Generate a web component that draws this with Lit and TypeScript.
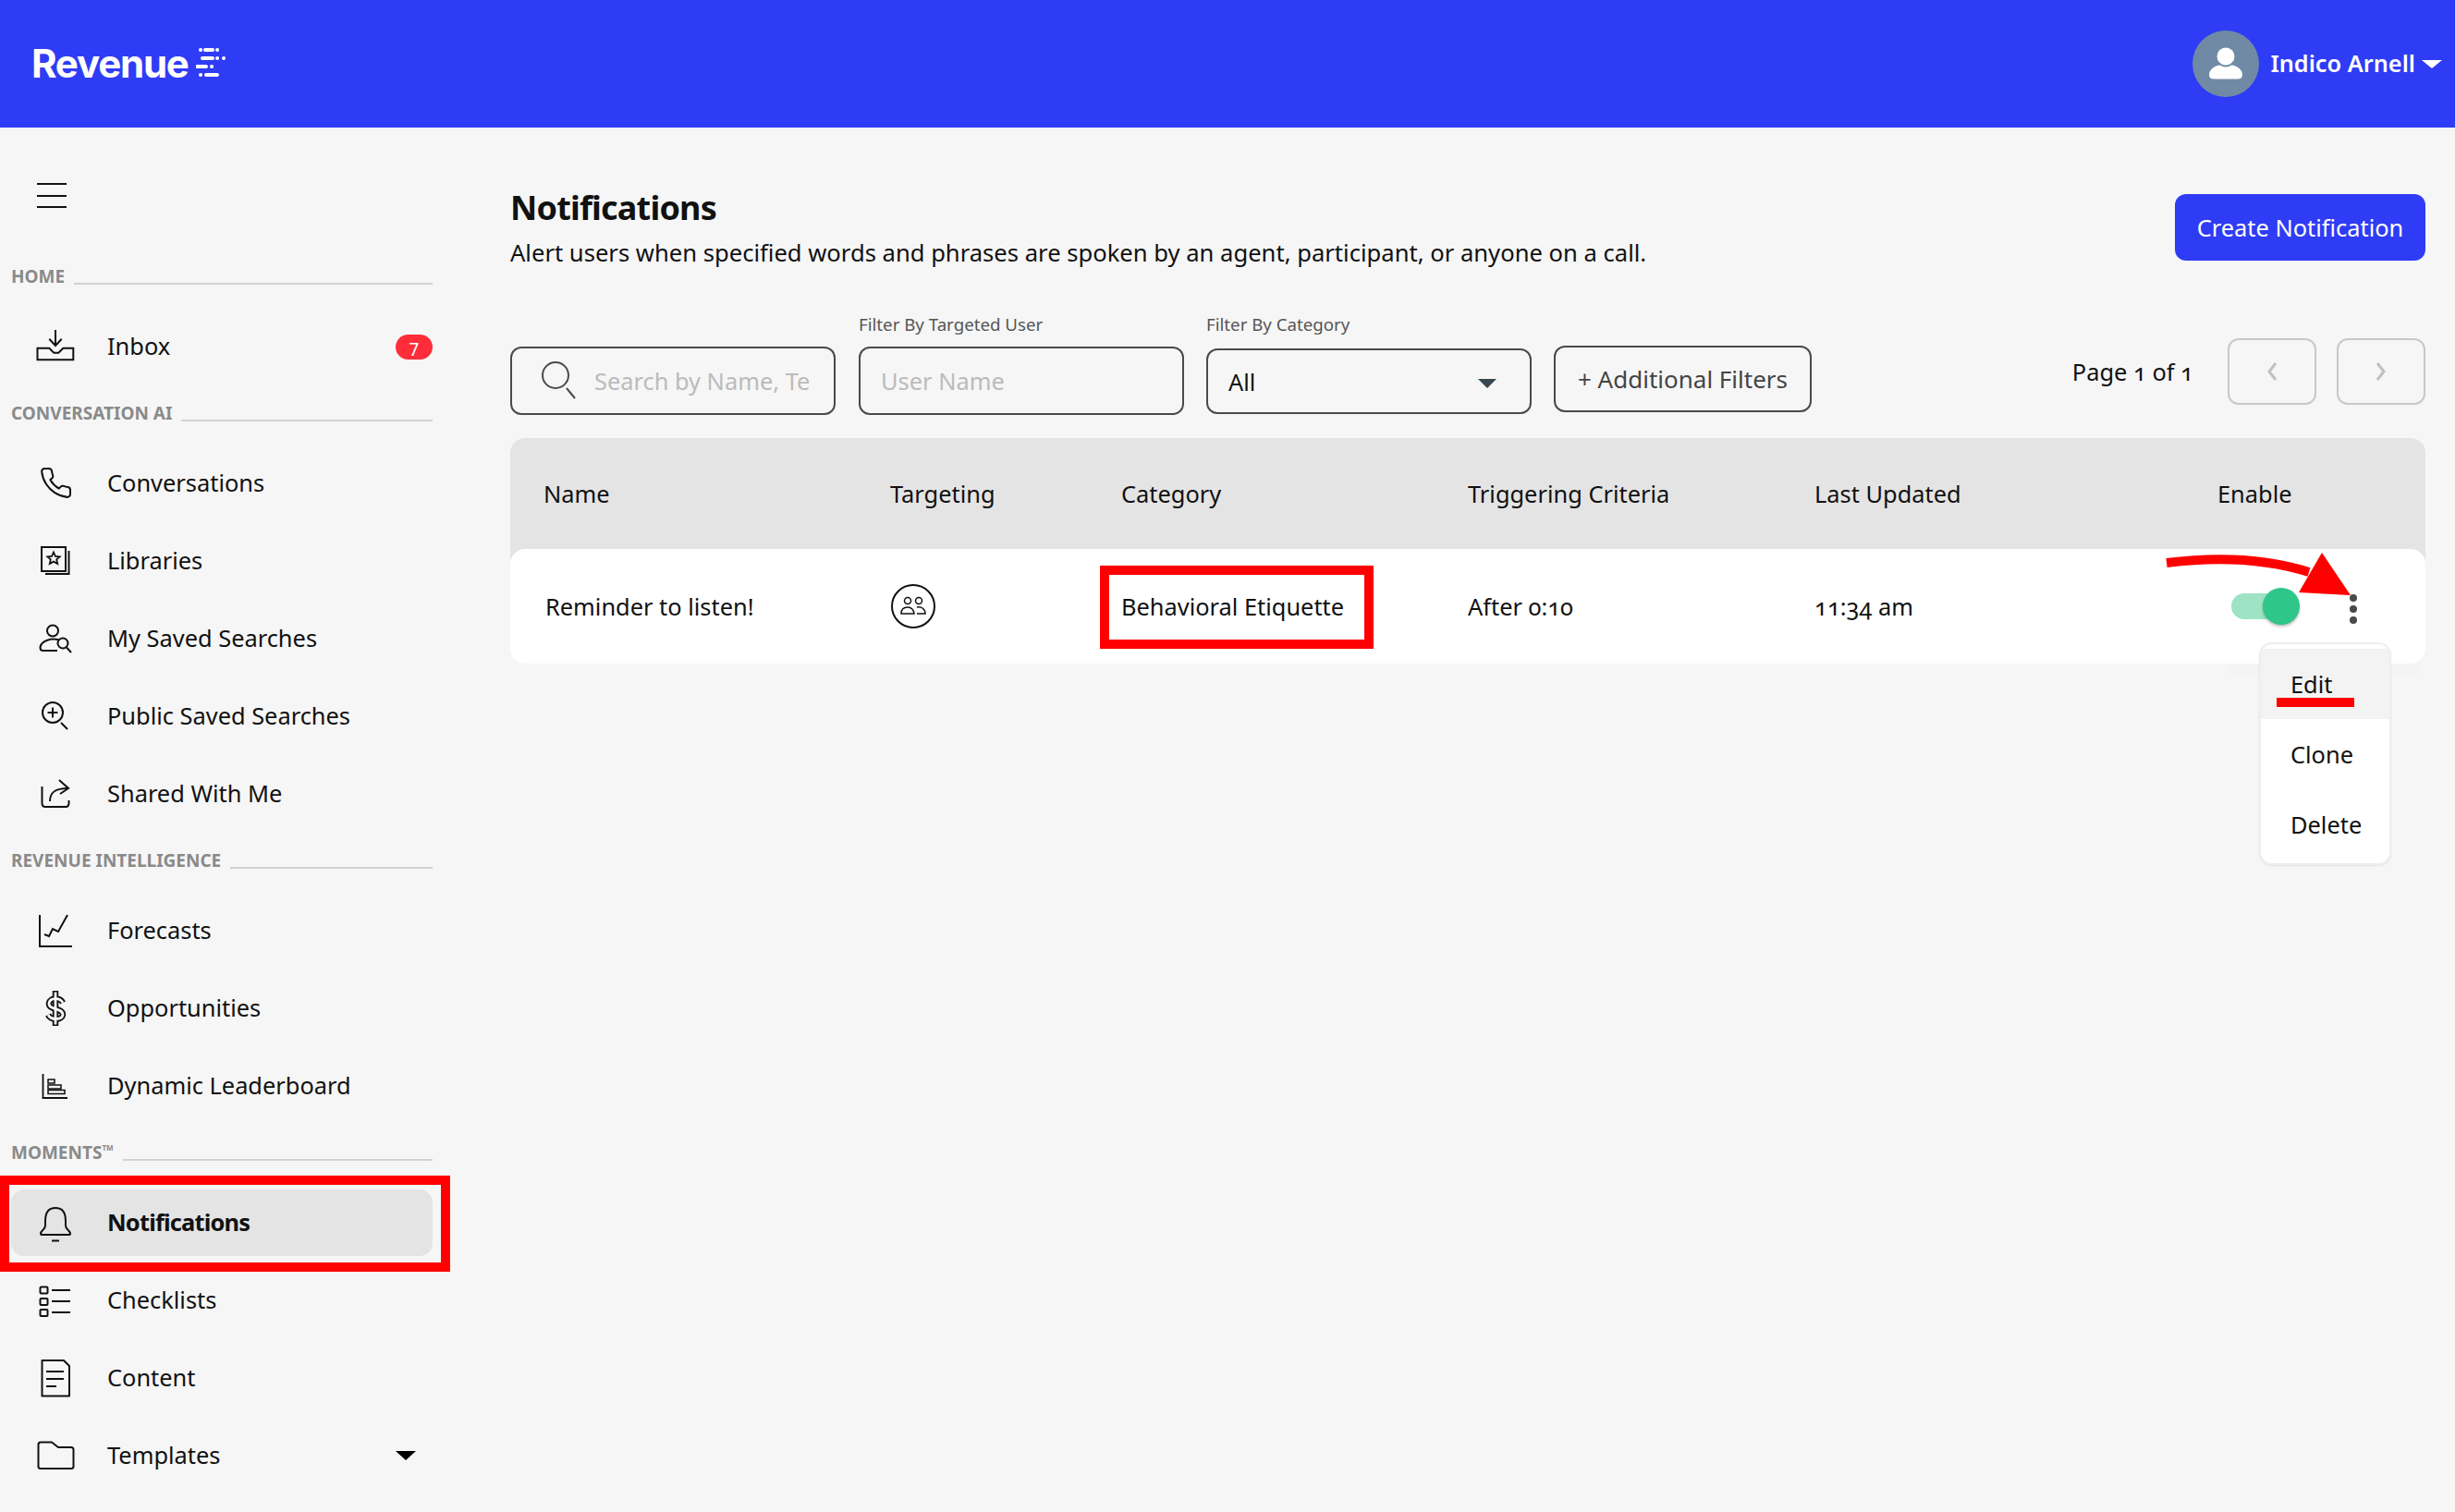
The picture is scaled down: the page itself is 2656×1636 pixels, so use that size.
import { LitElement, html, css, svg } from "lit";
import { customElement } from "lit/decorators.js";

const ic = (body: any) => html`<svg class="ic" viewBox="0 0 48 48" width="48" height="48" fill="none" stroke="#111" stroke-width="2">${body}</svg>`;

const icons: Record<string, any> = {
  inbox: svg`<path d="M4.5 25.7H17.3L22.3 30.7H27.3L32.3 25.7H43.3V38.3H4.5Z"/><path d="M24 6V23M17.3 15.7L24 23L30.7 15.7"/>`,
  phone: svg`<g transform="translate(5.9 4.9) scale(1.55)" stroke-width="1.3"><path d="M22 16.92v3a2 2 0 0 1-2.18 2 19.79 19.79 0 0 1-8.63-3.07 19.5 19.5 0 0 1-6-6 19.79 19.79 0 0 1-3.07-8.67A2 2 0 0 1 4.11 2h3a2 2 0 0 1 2 1.72 12.84 12.84 0 0 0 .7 2.81 2 2 0 0 1-.45 2.11L8.09 9.91a16 16 0 0 0 6 6l1.27-1.27a2 2 0 0 1 2.11-.45 12.84 12.84 0 0 0 2.81.7A2 2 0 0 1 22 16.92z"/></g>`,
  lib: svg`<rect x="9" y="9" width="26" height="26"/><path d="M38.5 13V38H13"/><path d="M22 14.5L24 19L28.6 19.4L25.2 22.4L26.2 27L22 24.6L17.8 27L18.8 22.4L15.4 19.4L20 19Z" stroke-width="1.8"/>`,
  mysaved: svg`<circle cx="21" cy="15.5" r="6"/><path d="M28 25.5C20 23 8.500 26 7.500 33.500C7.500 36 8.500 37 10.500 37H26"/><circle cx="32" cy="29" r="5.500"/><path d="M36 33.500L41 39"/>`,
  pubsearch: svg`<circle cx="21" cy="20" r="11"/><path d="M21 14.500V25.500M15.500 20H26.500M30 31L37 38"/>`,
  shared: svg`<path d="M9.500 16V34Q9.500 38 13 38H35Q38.500 38 38.500 34V31"/><path d="M18 32C18 22 24 18 37 18"/><path d="M28 9L38 18L29 24"/>`,
  forecast: svg`<path d="M7 7V41H42"/><path d="M12 28L17 30L21 22L27 25L37 7"/>`,
  dollar: svg`<g stroke-linecap="butt"><path d="M24 5V43" stroke-width="6.500"/><path d="M32 18C29 12 18 12 17 18.500C16 26 32 23 32 31C31 37 19 37 16 31" stroke-width="6.500"/><path d="M24 6.500V41.500" stroke="#f6f6f6" stroke-width="2.800"/><path d="M32 18C29 12 18 12 17 18.500C16 26 32 23 32 31C31 37 19 37 16 31" stroke="#f6f6f6" stroke-width="2.800"/></g>`,
  board: svg`<path d="M10.500 11V37H37" stroke-width="1.800"/><rect x="16" y="17" width="7" height="4" stroke-width="1.500"/><rect x="16" y="23" width="14" height="4" stroke-width="1.500"/><rect x="16" y="28.500" width="18" height="4" stroke-width="1.500"/>`,
  bell: svg`<path d="M24 8C15 8 13 15 13 22V27C13 32 8 32 8 36Q8 37 9 37H39Q40 37 40 36C40 32 35 32 35 27V22C35 15 33 8 24 8Z"/><path d="M20 43.500H28"/>`,
  check: svg`<rect x="7.500" y="9.500" width="8" height="7" rx="1"/><rect x="7.500" y="22" width="8" height="7" rx="1"/><rect x="7.500" y="34" width="8" height="7" rx="1"/><path d="M20 13H40M20 25H40M20 37H40"/>`,
  doc: svg`<path d="M9.500 5H33L39 11V43.500H9.500Z" stroke-linejoin="round"/><path d="M14 17H33M14 25H33M14 33H25"/>`,
  folder: svg`<path d="M5.500 12Q5.500 9.500 8 9.500H20L27 15H41Q43.500 15 43.500 17.500V36Q43.500 38 41 38H8Q5.500 38 5.500 36Z" stroke-linejoin="round"/>`,
};

type Item = { t: string; i: string; active?: boolean; badge?: string; caret?: boolean };
const sections: { label: string; tm?: boolean; items: Item[] }[] = [
  { label: "HOME", items: [{ t: "Inbox", i: "inbox", badge: "7" }] },
  { label: "CONVERSATION AI", items: [
    { t: "Conversations", i: "phone" }, { t: "Libraries", i: "lib" }, { t: "My Saved Searches", i: "mysaved" },
    { t: "Public Saved Searches", i: "pubsearch" }, { t: "Shared With Me", i: "shared" } ] },
  { label: "REVENUE INTELLIGENCE", items: [
    { t: "Forecasts", i: "forecast" }, { t: "Opportunities", i: "dollar" }, { t: "Dynamic Leaderboard", i: "board" } ] },
  { label: "MOMENTS", tm: true, items: [
    { t: "Notifications", i: "bell", active: true }, { t: "Checklists", i: "check" }, { t: "Content", i: "doc" }, { t: "Templates", i: "folder", caret: true } ] },
];

@customElement("app-root")
export class AppRoot extends LitElement {
  static styles = css`
    :host { display: block; width: 2656px; height: 1636px; overflow: hidden; background: #f6f6f6; color: #111;
      font-family: "Noto Sans", sans-serif; font-size: 25.400px; font-variant-numeric: oldstyle-nums; position: relative; }
    * { box-sizing: border-box; }
    .top { height: 138px; background: #2f3cf5; display: flex; align-items: center; justify-content: space-between; padding: 0 14px 0 34px; color: #fff; }
    .logo { display: flex; align-items: center; gap: 8px; }
    .logo b { font-family: Inter, sans-serif; font-size: 42px; font-weight: 700; letter-spacing: -1.2px; line-height: 1; }
    .user { display: flex; align-items: center; gap: 12px; font-size: 25.300px; font-weight: 600; }
    .user span { margin-top: -3px; }
    .avatar { width: 72px; height: 72px; border-radius: 50%; background: #708aa5; display: flex; align-items: center; justify-content: center; }
    .ucaret { width: 0; height: 0; border-left: 11px solid transparent; border-right: 11px solid transparent; border-top: 9px solid #fff; margin-left: -5px; }
    .body { display: flex; }
    .side { width: 552px; padding: 0 84px 0 12px; }
    .burger { height: 131px; padding: 60px 0 0 28px; display: flex; flex-direction: column; gap: 10.500px; }
    .burger i { display: block; width: 32px; height: 2px; background: #111; }
    .sec { height: 64px; display: flex; align-items: flex-end; gap: 10px; padding-bottom: 22px; color: #8a8a8a; font-size: 19px; font-weight: 700; line-height: 24px; white-space: nowrap; }
    .sec sup { font-size: 8px; line-height: 0; vertical-align: 9px; }
    .sec::after { content: ""; flex: 1; height: 2px; background: #d2d2d2; margin-bottom: 3px; }
    .row { height: 84px; display: flex; align-items: center; position: relative; }
    .row .ic { margin-left: 24px; flex: none; }
    .row span.t { margin-left: 32px; padding-bottom: 2px; }
    .row.active::before { content: ""; position: absolute; left: 0; right: 0; top: 6px; bottom: 6px; background: #e4e4e4; border-radius: 14px; }
    .row.active .ic, .row.active .t { position: relative; }
    .row.active span.t { font-weight: 700; letter-spacing: -0.8px; }
    .badge { margin-left: auto; width: 40px; height: 27px; border-radius: 14px; background: #ff2d3a; color: #fff; font-size: 19px; display: flex; align-items: center; justify-content: center; }
    .caret { margin-left: auto; margin-right: 18px; width: 0; height: 0; border-left: 11px solid transparent; border-right: 11px solid transparent; border-top: 10px solid #000; }
    .redbox { position: absolute; border: 10px solid #f00; pointer-events: none; }
    .navbox { left: -12px; right: -19px; top: -9px; height: 104px; }
    .main { width: 2072px; padding-top: 65px; }
    .head { display: flex; justify-content: space-between; height: 172px; }
    h1 { margin: 0; font-size: 36px; font-weight: 700; line-height: 44px; letter-spacing: -0.8px; }
    .sub { margin-top: 7px; font-size: 25.600px; line-height: 40px; }
    .create { margin-top: 7px; width: 271px; height: 72px; border-radius: 12px; background: #2f3cf5; color: #fff; display: flex; align-items: center; justify-content: center; }
    .filters { display: flex; align-items: flex-start; height: 99px; position: relative; }
    .field { width: 352px; margin-right: 25px; }
    .field.second { margin-right: 24px; }
    .lab { height: 0; position: relative; top: -38px; font-size: 18.700px; line-height: 28px; color: #555; white-space: nowrap; }
    .box { height: 74px; border: 2.500px solid #4a4a4a; border-radius: 12px; display: flex; align-items: center; padding: 0 22px; color: #bbb; white-space: nowrap; overflow: hidden; }
    .box.search { padding: 0 14px 0 31px; gap: 20px; }
    .sicon { flex: none; }
    .box.sel { height: 71px; color: #111; position: relative; justify-content: space-between; margin-top: 2px; }
    .seltri { width: 0; height: 0; border-left: 10px solid transparent; border-right: 10px solid transparent; border-top: 10px solid #37474f; margin: 4px 14px 0 0; }
    .more { width: 279px; height: 72px; margin-top: -1px; margin-left: -1px; border: 2.500px solid #4a4a4a; border-radius: 12px; display: flex; align-items: center; justify-content: center; color: #444; white-space: nowrap; font-size: 26px; }
    .pager { margin-left: auto; display: flex; align-items: center; gap: 22px; margin-top: -9px; }
    .pager .lbl { margin-right: 15px; }
    .pg { width: 96px; height: 72px; border: 2.500px solid #c8c8c8; border-radius: 12px; display: flex; align-items: center; justify-content: center; }
    .thead, .trow { display: grid; grid-template-columns: 411px 250px 375px 375px 436px 225px; align-items: center; }
    .thead { height: 120px; background: #e4e4e4; border-radius: 16px 16px 0 0; padding-left: 0; }
    .thead > div:first-child { padding-left: 36px; }
    .trow { height: 124px; margin-top: 0; background: #fff; border-radius: 16px; position: relative; }
    .trow > div:first-child { padding-left: 38px; }
    .wrap { background: linear-gradient(#e4e4e4 0 30px, transparent 30px); }
    .ticon { display: block; margin-left: 1px; }
    .behav { position: relative; }
    .behavbox { left: -23px; top: -27px; width: 296px; height: 90px; }
    .track { position: absolute; left: 1862px; top: 48px; width: 54px; height: 28px; border-radius: 14px; background: #9de3c4; }
    .thumb { position: absolute; left: 1896px; top: 42px; width: 40px; height: 40px; border-radius: 50%; background: #2fc68a; box-shadow: 0 2px 3px rgba(0,0,0,.25); }
    .dots { position: absolute; left: 1990px; top: 49px; display: flex; flex-direction: column; gap: 4px; }
    .dots i { display: block; width: 8px; height: 8px; border-radius: 50%; background: #4a4a4a; }
    .arrow { position: absolute; left: 1780px; top: 0; overflow: visible; }
    .menu { position: absolute; left: 1892px; top: 101px; width: 143px; height: 241px; background: #fff; border: 2px solid #eee; border-radius: 14px; box-shadow: 0 1px 2px rgba(0,0,0,.08); z-index: 3; padding-top: 5px; overflow: hidden; }
    .mi { height: 76px; display: flex; align-items: center; padding-left: 32px; }
    .mi.on { background: #f3f3f3; position: relative; }
    .under { position: absolute; left: 17px; top: 53px; width: 84px; height: 10px; background: #f00; }
    .shade { position: absolute; left: 1860px; right: 4px; top: 124px; height: 12px; background: #f4f4f4; }
  `;

  render() {
    return html`
      <div class="top">
        <div class="logo"><b>Revenue</b>
          <svg width="38" height="36" viewBox="0 0 38 36" fill="none" stroke="#fff" stroke-width="4" stroke-linecap="round">
            <path d="M5 3H5.100M10 3H18M23 3H23.100M7 12H18M23 12H23.100M30 12H30.100M1 21H11M17 21H17.100M5 30H5.100M11 30H23"/>
          </svg>
        </div>
        <div class="user">
          <div class="avatar"><svg width="40" height="40" viewBox="0 0 40 40" fill="#fff"><circle cx="20" cy="12" r="9.500"/><path d="M2 32C2 26 8 22 14 21.500C17 24 23 24 26 21.500C32 22 38 26 38 32C38 35 36 36.500 33 36.500H7C4 36.500 2 35 2 32Z"/></svg></div>
          <span>Indico Arnell</span><i class="ucaret"></i>
        </div>
      </div>
      <div class="body">
        <nav class="side">
          <div class="burger"><i></i><i></i><i></i></div>
          ${sections.map((s) => html`
            <div class="sec"><span>${s.label}${s.tm ? html`<sup>TM</sup>` : ""}</span></div>
            ${s.items.map((it) => html`
              <div class="row ${it.active ? "active" : ""}">
                ${ic(icons[it.i])}<span class="t">${it.t}</span>
                ${it.badge ? html`<span class="badge">${it.badge}</span>` : ""}
                ${it.caret ? html`<i class="caret"></i>` : ""}
                ${it.active ? html`<div class="redbox navbox"></div>` : ""}
              </div>`)}
          `)}
        </nav>
        <main class="main">
          <div class="head">
            <div>
              <h1>Notifications</h1>
              <div class="sub">Alert users when specified words and phrases are spoken by an agent, participant, or anyone on a call.</div>
            </div>
            <div class="create">Create Notification</div>
          </div>
          <div class="filters">
            <div class="field"><div class="box search">
              <svg class="sicon" width="38" height="42" viewBox="0 0 38 42" fill="none" stroke="#4a4a4a" stroke-width="2"><circle cx="16" cy="15" r="14"/><path d="M28 29L37 40"/></svg>
              <span>Search by Name, Te</span></div></div>
            <div class="field second"><div class="lab">Filter By Targeted User</div><div class="box">User Name</div></div>
            <div class="field"><div class="lab">Filter By Category</div><div class="box sel"><span>All</span><i class="seltri"></i></div></div>
            <div class="more">+ Additional Filters</div>
            <div class="pager">
              <span class="lbl">Page 1 of 1</span>
              <div class="pg"><svg width="16" height="24" viewBox="0 0 16 24" fill="none" stroke="#c0c0c0" stroke-width="3"><path d="M12 3L5 12L12 21"/></svg></div>
              <div class="pg"><svg width="16" height="24" viewBox="0 0 16 24" fill="none" stroke="#c0c0c0" stroke-width="3"><path d="M4 3L11 12L4 21"/></svg></div>
            </div>
          </div>
          <div class="thead"><div>Name</div><div>Targeting</div><div>Category</div><div>Triggering Criteria</div><div>Last Updated</div><div>Enable</div></div>
          <div class="wrap">
            <div class="trow">
              <div>Reminder to listen!</div>
              <div><svg class="ticon" width="48" height="48" viewBox="0 0 48 48" fill="none" stroke="#111" stroke-width="2"><circle cx="24" cy="24" r="23"/><g stroke-width="1.500"><circle cx="18" cy="18" r="3.500"/><circle cx="30" cy="18" r="3.500"/><path d="M11 32C11 26 15 25 18 25C21 25 24 26 25 32ZM28 25C33 24 37 27 37 32H28"/></g></svg></div>
              <div class="behav"><span>Behavioral Etiquette</span><div class="redbox behavbox"></div></div>
              <div>After 0:10</div>
              <div>11:34 am</div>
              <div></div>
              <div class="track"></div><div class="thumb"></div>
              <div class="dots"><i></i><i></i><i></i></div>
              <svg class="arrow" width="200" height="60" viewBox="0 0 200 60" fill="none">
                <path d="M12 15C60 9 115 9 166 25" stroke="#f00" stroke-width="10"/>
                <path d="M180 4L211 50L155 47Z" fill="#f00"/>
              </svg>
              <div class="menu">
                <div class="mi on">Edit<i class="under"></i></div>
                <div class="mi">Clone</div>
                <div class="mi">Delete</div>
              </div>
              <div class="shade"></div>
            </div>
          </div>
        </main>
      </div>
    `;
  }
}
